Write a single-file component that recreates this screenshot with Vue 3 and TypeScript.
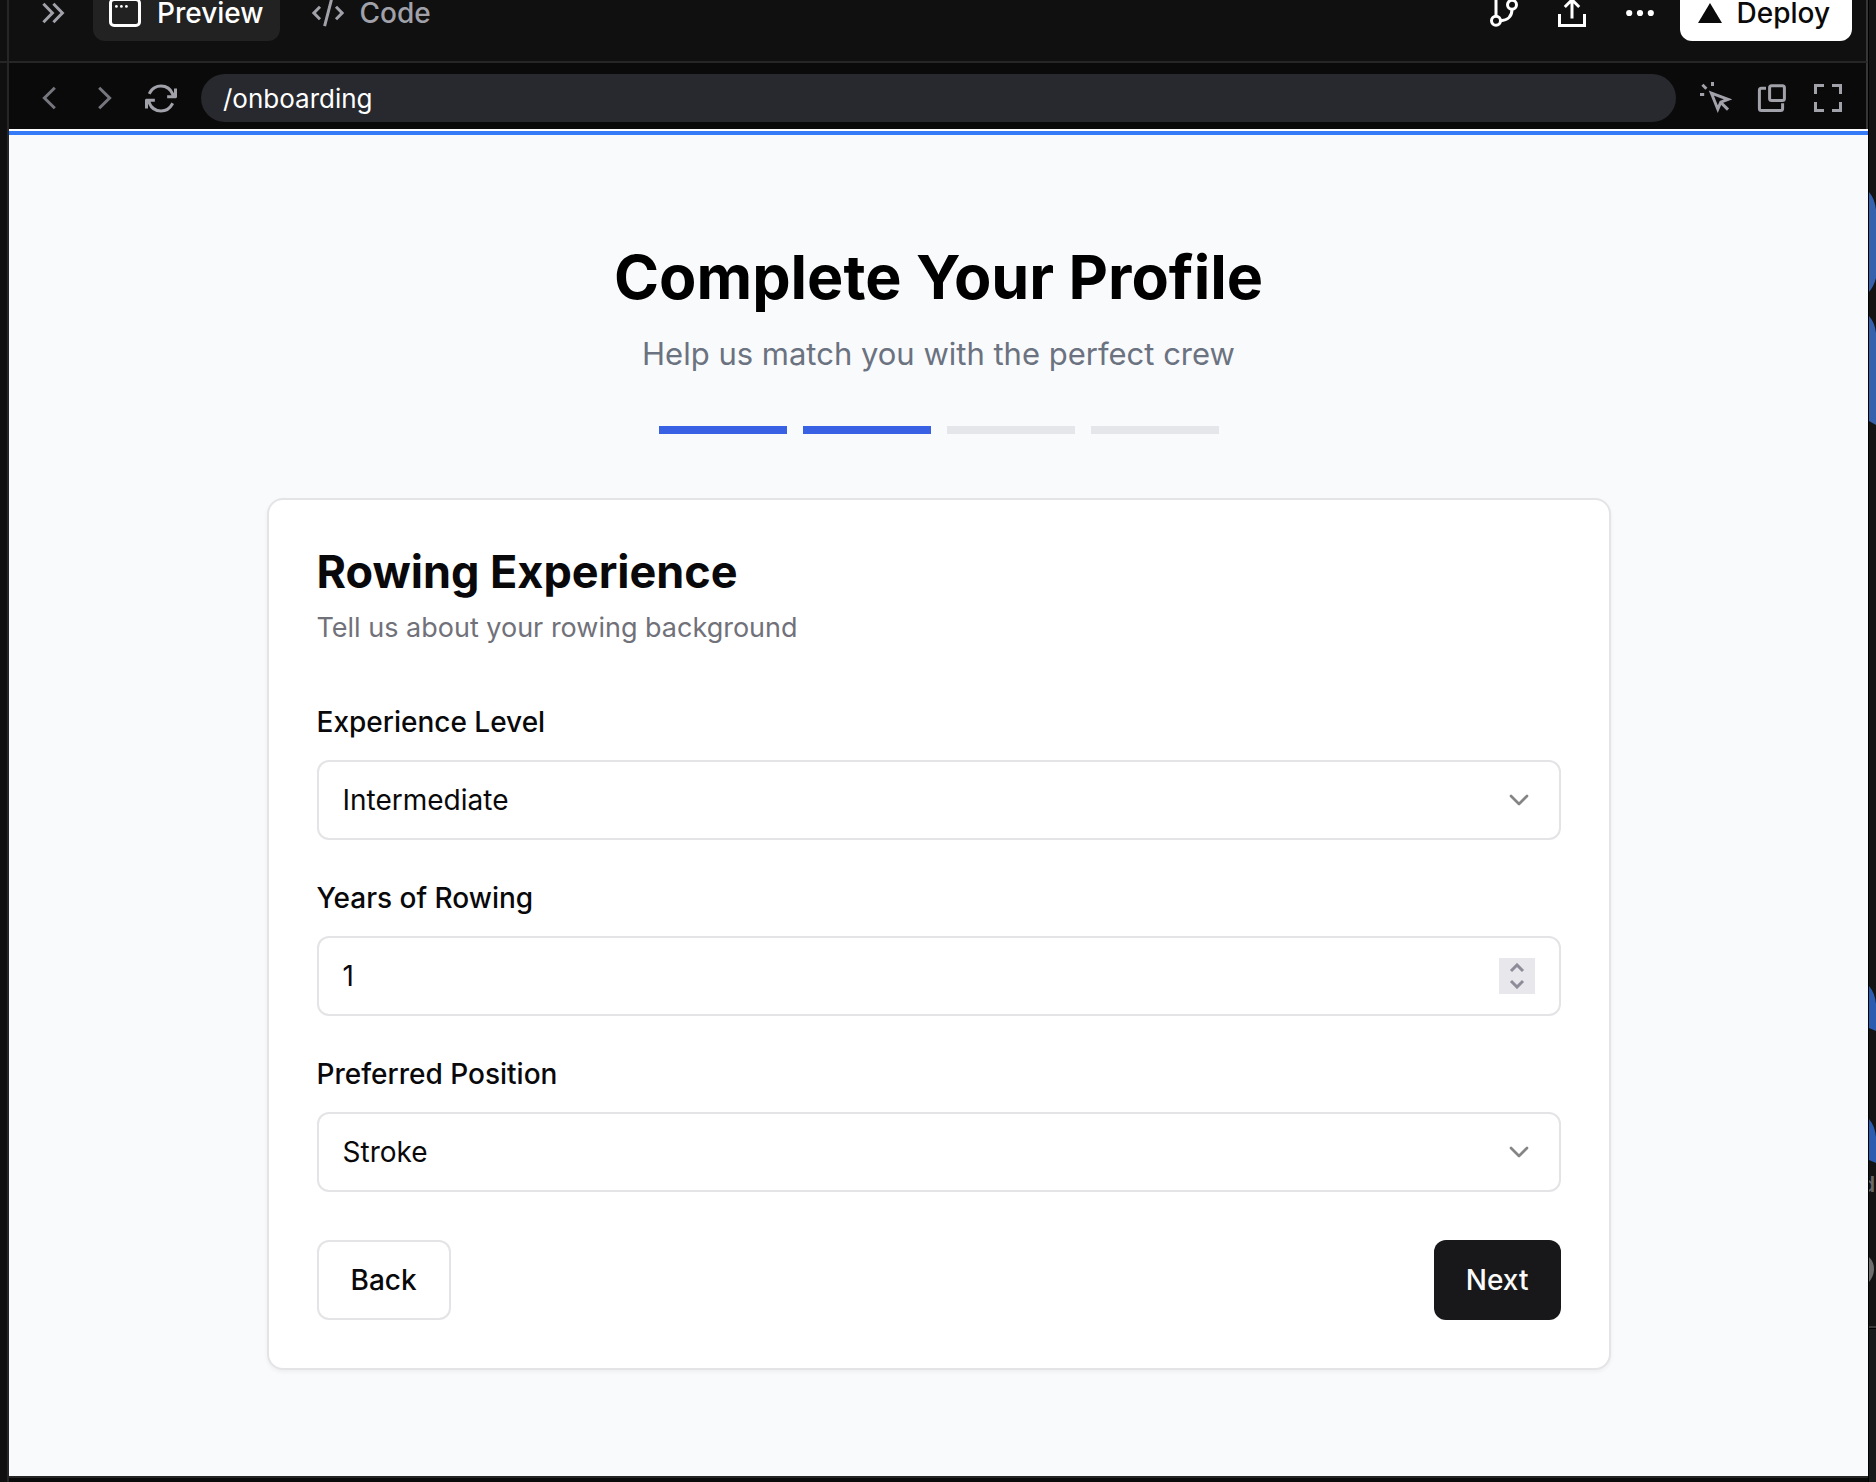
<script setup lang="ts">
import { ref } from 'vue'

const totalSteps = 4
const currentStep = ref(2)
const path = ref('/onboarding')
const level = ref('Intermediate')
const years = ref(1)
const position = ref('Stroke')

const levels = ['Beginner', 'Intermediate', 'Advanced', 'Elite']
const positions = ['Bow', 'Stroke', 'Engine Room', 'Coxswain']

function stepYears(delta: number) {
  years.value = Math.max(0, years.value + delta)
}
function back() {
  currentStep.value = Math.max(1, currentStep.value - 1)
}
function next() {
  currentStep.value = Math.min(totalSteps, currentStep.value + 1)
}
</script>

<template>
  <div class="shell">
    <div class="left-rail"></div>

    <div class="workspace">
      <header class="topbar">
        <button class="icon-btn muted collapse" aria-label="Collapse panel">
          <svg viewBox="0 0 16 16" class="icon"><path d="M3.2 3.4 7.7 8l-4.5 4.6M8.2 3.4 12.7 8l-4.5 4.6" stroke-width="1.5" /></svg>
        </button>
        <nav class="tabs">
          <button class="tab active">
            <svg viewBox="0 0 16 16" class="icon">
              <rect x=".75" y="1.25" width="14.5" height="13" rx="1.8" stroke-width="1.5" />
              <g class="solid"><circle cx="3.7" cy="4.7" r=".7" /><circle cx="6.2" cy="4.7" r=".7" /><circle cx="8.7" cy="4.7" r=".7" /></g>
            </svg>
            <span>Preview</span>
          </button>
          <button class="tab">
            <svg viewBox="0 0 16 16" class="icon"><path d="M4 4.9.95 8 4 11.1M12 4.9 15.05 8 12 11.1M9.7 1.4 6.3 14.6" stroke-width="1.5" /></svg>
            <span>Code</span>
          </button>
        </nav>
        <div class="actions">
          <button class="icon-btn" aria-label="Branch">
            <svg viewBox="0 0 16 16" class="icon"><path d="M4 .5v9.2M12 6.1c0 3.6-2.2 5.6-5.7 5.8" stroke-width="1.5" /><circle cx="4" cy="11.9" r="2.25" stroke-width="1.5" /><circle cx="12" cy="3.9" r="2.25" stroke-width="1.5" /></svg>
          </button>
          <button class="icon-btn" aria-label="Share">
            <svg viewBox="0 0 16 16" class="icon"><path d="M1.75 8.5v5.75h12.5V8.5M8 10.8V1.5M4.4 5 8 1.4 11.6 5" stroke-width="1.5" /></svg>
          </button>
          <button class="icon-btn" aria-label="More">
            <svg viewBox="0 0 16 16" class="icon solid"><circle cx="2.6" cy="8" r="1.55" /><circle cx="8" cy="8" r="1.55" /><circle cx="13.4" cy="8" r="1.55" /></svg>
          </button>
          <button class="deploy">
            <svg viewBox="0 0 28 28" class="triangle solid"><path d="M14 4 26 24H2Z" /></svg>
            <span>Deploy</span>
          </button>
        </div>
      </header>

      <div class="urlbar">
        <button class="icon-btn dim" aria-label="Back">
          <svg viewBox="0 0 16 16" class="icon"><path d="M10.9 2.9 5.7 8l5.2 5.1" stroke-width="1.5" /></svg>
        </button>
        <button class="icon-btn dim" aria-label="Forward">
          <svg viewBox="0 0 16 16" class="icon"><path d="M5.1 2.9 10.3 8l-5.2 5.1" stroke-width="1.5" /></svg>
        </button>
        <button class="icon-btn muted" aria-label="Reload">
          <svg viewBox="0 0 16 16" class="icon solid"><path d="M8 1.25c-2.66 0-4.98 1.49-6.16 3.67l-.36.66 1.32.72.36-.66A5.5 5.5 0 0 1 8 2.75a5.5 5.5 0 0 1 5.27 3.92h-2.2v1.5h4.18c.41 0 .75-.33.75-.75V3.25h-1.5v2.4A7 7 0 0 0 8 1.25ZM1.5 10.86v2.39H0V9.08c0-.42.34-.75.75-.75h4.18v1.5h-2.2A5.5 5.5 0 0 0 8 13.75a5.5 5.5 0 0 0 4.83-2.86l.36-.66 1.31.72-.36.66A7 7 0 0 1 8 15.25a7 7 0 0 1-6.5-4.39Z" /></svg>
        </button>
        <input v-model="path" class="url" type="text" aria-label="Page path" spellcheck="false" />
        <button class="icon-btn muted" aria-label="Select element">
          <svg viewBox="0 0 16 16" class="icon"><path d="M5.7 5.6 14 8.7 10.4 10.1 8.9 13.6ZM10.3 10.1l3.7 3.7M0 6.25h2.1M6.25 0v2M1.2 1.4l2 2" stroke-width="1.5" /></svg>
        </button>
        <button class="icon-btn muted" aria-label="Open in window">
          <svg viewBox="0 0 16 16" class="icon"><path d="M5 3.1H2.7a1 1 0 0 0-1 1v9.2a1 1 0 0 0 1 1h9.6a1 1 0 0 0 1-1v-2.7" stroke-width="1.5" /><rect x="6.8" y="1.9" width="7.4" height="7.3" rx="1" stroke-width="1.5" /></svg>
        </button>
        <button class="icon-btn muted" aria-label="Fullscreen">
          <svg viewBox="0 0 16 16" class="icon"><path d="M1.75 6V1.75H6M10 1.75h4.25V6M14.25 10v4.25H10M6 14.25H1.75V10" stroke-width="1.5" /></svg>
        </button>
      </div>

      <main class="page">
        <h1>Complete Your Profile</h1>
        <p class="lead">Help us match you with the perfect crew</p>
        <div class="steps">
          <span v-for="n in totalSteps" :key="n" class="step" :class="{ done: n <= currentStep }"></span>
        </div>

        <form class="card" @submit.prevent="next">
          <h2>Rowing Experience</h2>
          <p class="desc">Tell us about your rowing background</p>

          <div class="field">
            <label for="level">Experience Level</label>
            <div class="control">
              <select id="level" v-model="level"><option v-for="l in levels" :key="l">{{ l }}</option></select>
              <svg viewBox="0 0 24 24" class="chevron"><path d="m6 9 6 6 6-6" /></svg>
            </div>
          </div>
          <div class="field">
            <label for="years">Years of Rowing</label>
            <div class="control">
              <input id="years" v-model.number="years" type="number" min="0" />
              <div class="spinner">
                <button type="button" aria-label="Increase" @click="stepYears(1)"><svg viewBox="0 0 16 10"><path d="m2 8 6-6 6 6" /></svg></button>
                <button type="button" aria-label="Decrease" @click="stepYears(-1)"><svg viewBox="0 0 16 10"><path d="m2 2 6 6 6-6" /></svg></button>
              </div>
            </div>
          </div>
          <div class="field">
            <label for="position">Preferred Position</label>
            <div class="control">
              <select id="position" v-model="position"><option v-for="p in positions" :key="p">{{ p }}</option></select>
              <svg viewBox="0 0 24 24" class="chevron"><path d="m6 9 6 6 6-6" /></svg>
            </div>
          </div>

          <div class="buttons">
            <button type="button" class="btn outline" @click="back">Back</button>
            <button type="submit" class="btn primary">Next</button>
          </div>
        </form>
      </main>
      <div class="bottom-edge"></div>
    </div>

    <aside class="right-rail" aria-hidden="true">
      <svg class="behind" width="7" height="1482" viewBox="0 0 7 1482">
        <g fill="#3561ad">
          <path d="M0 192Q6 199 7 210V278Q5 286 0 292Z" />
          <path d="M0 316Q6 323 7 333V425L0 421Z" />
        </g>
        <g fill="#2b5cb0">
          <path d="M0 986Q6 993 7 1004V1031L0 1028Z" />
          <path d="M0 1119Q6 1126 7 1137V1163L0 1160Z" />
        </g>
        <text x="-7" y="1192" font-size="21" font-weight="600" fill="#6a6a6a">d</text>
        <path d="M0 1257Q5 1262 5 1269T0 1282Z" fill="#6e6e6e" />
        <path d="M0 1326h7v2H0Z" fill="#3a3a3a" />
        <path d="M0 1328h7v1H0Z" fill="#000" />
        <path d="M0 1329h7v153H0Z" fill="#17191b" />
      </svg>
    </aside>
  </div>
</template>

<style>
body {
  margin: 0;
  background: #0a0a0a;
}
</style>

<style scoped>
.shell {
  display: grid;
  grid-template-columns: 9px minmax(0, 1fr) 8px;
  min-height: 100vh;
  background: #0a0a0a;
  font-family: Inter, "Liberation Sans", sans-serif;
  font-size: 28px;
  color: #09090b;
}
.shell *,
.shell *::before {
  box-sizing: border-box;
}
button,
input,
select {
  margin: 0;
  padding: 0;
  border: 0;
  background: none;
  font: inherit;
  color: inherit;
}
h1,
h2,
p {
  margin: 0;
}
svg {
  display: block;
  fill: none;
  stroke: currentColor;
}
.solid,
.behind {
  fill: currentColor;
  stroke: none;
}
.left-rail {
  border-right: 2px solid #262626;
  background: linear-gradient(#262626, #262626) 0 61px / 100% 2px no-repeat #101010;
}
.workspace {
  display: flex;
  flex-direction: column;
}

/* Editor chrome */
.topbar {
  display: flex;
  align-items: flex-end;
  height: 63px;
  padding: 0 14px 20px 28px;
  overflow: hidden;
  border-right: 2px solid #363636;
  border-bottom: 2px solid #262626;
  background: #101010;
  color: #fff;
}
.icon {
  flex: none;
  width: 32px;
  height: 32px;
}
.icon-btn {
  display: flex;
  flex: none;
  align-items: center;
  justify-content: center;
  width: 32px;
  height: 32px;
}
.topbar .icon-btn {
  height: 56px;
}
.muted {
  color: #a1a1aa;
}
.dim {
  color: #76767e;
}
.tabs {
  display: flex;
  gap: 16px;
  margin-left: 24px;
}
.tab {
  display: flex;
  align-items: center;
  gap: 16px;
  height: 56px;
  padding: 0 16px;
  border-radius: 12px;
  font-weight: 500;
  line-height: 24px;
  color: #a1a1aa;
}
.tab.active {
  background: #222;
  color: #fff;
}
.actions {
  display: flex;
  gap: 36px;
  margin-left: auto;
}
.deploy {
  display: flex;
  align-items: center;
  gap: 12px;
  height: 56px;
  margin-left: -12px;
  padding: 0 22px 0 16px;
  border-radius: 12px;
  background: #fff;
  font-weight: 500;
  line-height: 24px;
  color: #0a0a0a;
}
.triangle {
  width: 28px;
  height: 28px;
}
.urlbar {
  display: flex;
  align-items: center;
  gap: 24px;
  height: 66px;
  padding: 4px 22px 0 24px;
  border-right: 2px solid #363636;
  background: #0a0a0a;
}
.url {
  flex: 1;
  min-width: 0;
  height: 48px;
  padding: 0 22px;
  border-radius: 24px;
  background: #28292e;
  font-size: 26px;
  color: #fff;
}

/* Previewed page */
.page {
  display: flex;
  flex: 1;
  flex-direction: column;
  align-items: center;
  padding: 116px 64px 64px;
  border-top: 2px solid #fff;
  background: linear-gradient(#357af6, #357af6) 0 0 / 100% 4px no-repeat #f9fafc;
}
h1 {
  font-size: 61px;
  line-height: 60px;
  font-weight: 700;
  color: #000;
}
.lead {
  margin-top: 23px;
  font-size: 31px;
  line-height: 48px;
  color: #6b7280;
}
.steps {
  display: flex;
  gap: 16px;
  margin: 48px 0 64px;
}
.step {
  width: 128px;
  height: 8px;
  background: #e5e6ea;
}
.step.done {
  background: #3862e3;
}
.card {
  width: 100%;
  max-width: 1344px;
  padding: 48px;
  border: 2px solid #e4e4e7;
  border-radius: 16px;
  background: #fff;
  box-shadow: 0 2px 4px rgba(0, 0, 0, 0.05);
}
h2 {
  font-size: 45px;
  line-height: 48px;
  font-weight: 700;
}
.desc {
  margin: 12px 0 58px;
  font-size: 27px;
  line-height: 40px;
  color: #71717a;
}
.field {
  display: flex;
  flex-direction: column;
  gap: 22px;
  margin-bottom: 42px;
}
label {
  line-height: 32px;
  font-weight: 500;
}
.control {
  position: relative;
}
.control select,
.control input {
  display: block;
  width: 100%;
  height: 80px;
  padding: 0 24px;
  border: 2px solid #e4e4e7;
  border-radius: 12px;
  background: #fff;
  appearance: none;
}
.control input {
  appearance: textfield;
}
.chevron {
  position: absolute;
  top: 24px;
  right: 26px;
  width: 32px;
  height: 32px;
  color: #858585;
  stroke-width: 2;
  stroke-linecap: round;
  stroke-linejoin: round;
  pointer-events: none;
}
.spinner {
  position: absolute;
  top: 22px;
  right: 26px;
  display: flex;
  flex-direction: column;
  justify-content: center;
  gap: 6px;
  width: 36px;
  height: 36px;
  background: #e8e7ec;
  color: #8e8c99;
}
.spinner button {
  display: flex;
  justify-content: center;
}
.spinner svg {
  width: 16px;
  height: 10px;
  stroke-width: 3;
}
.buttons {
  display: flex;
  justify-content: space-between;
  margin-top: 48px;
}
.btn {
  height: 80px;
  padding: 0 32px;
  border-radius: 12px;
  font-weight: 500;
}
.outline {
  border: 2px solid #e4e4e7;
}
.primary {
  background: #18181b;
  color: #fafafa;
}
.bottom-edge {
  height: 6px;
  border-top: 2px solid #262626;
}
.right-rail {
  position: relative;
  overflow: hidden;
  border-left: 1px solid #000;
  background: #141414;
}
.behind {
  position: absolute;
  top: 0;
  left: 0;
}
</style>
